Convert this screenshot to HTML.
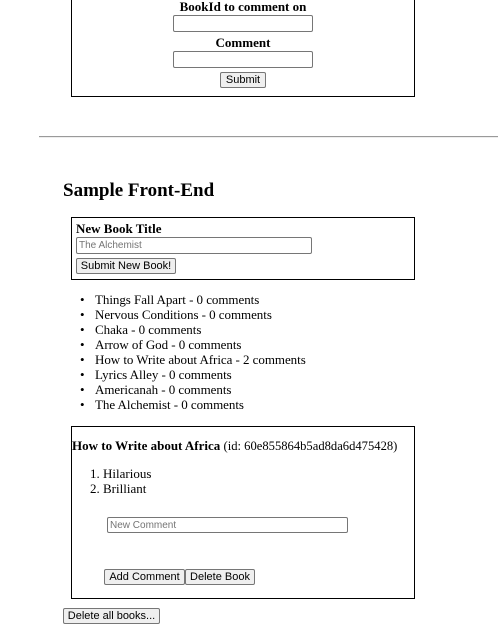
<!DOCTYPE html>
<html><head><style>
*{margin:0;padding:0;box-sizing:border-box}
body{width:498px;height:635px;overflow:hidden;background:#fff;font-family:"Liberation Serif",serif;font-size:13px;color:#000;position:relative}
.a{position:absolute;white-space:nowrap}
.box{position:absolute;border:1px solid #000}
input{position:absolute;border:1px solid #767676;border-radius:2px;background:#fff;font-family:"Liberation Sans",sans-serif;font-size:10px;padding:0 2px;color:#999}
button{position:absolute;border:1px solid #767676;border-radius:2px;background:#efefef;font-family:"Liberation Sans",sans-serif;font-size:11px;color:#000;line-height:13px;padding-top:1px}
b{font-weight:bold}
.ul div{letter-spacing:-0.05px;height:15px;line-height:15px;position:relative;padding-left:15px}
.dot{position:absolute;left:0;top:0;font-size:13px;line-height:15px}
</style></head><body>
<div class="box" style="left:71px;top:-5px;width:344px;height:102px"></div>
<div class="a" style="left:0;width:486px;text-align:center;top:-1px;font-weight:bold;line-height:15px">BookId to comment on</div>
<input style="left:173px;top:15px;width:140px;height:17px">
<div class="a" style="left:0;width:486px;text-align:center;top:35px;font-weight:bold;line-height:15px">Comment</div>
<input style="left:173px;top:51px;width:140px;height:17px">
<button style="left:220px;top:72px;width:46px;height:16px">Submit</button>

<div class="a" style="left:39px;top:136px;width:459px;height:2px;border-top:1px solid #9a9a9a;border-bottom:1px solid #eee"></div>
<div class="a" style="left:63px;top:180px;font-size:19px;font-weight:bold;line-height:22px">Sample Front-End</div>

<div class="box" style="left:71px;top:217px;width:344px;height:63px"></div>
<div class="a" style="left:76px;top:221px;font-weight:bold;line-height:15px">New Book Title</div>
<input style="left:76px;top:237px;width:236px;height:17px" placeholder="The Alchemist">
<button style="left:76px;top:258px;width:100px;height:16px">Submit New Book!</button>

<div class="a ul" style="left:80px;top:292px">
<div><span class="dot">•</span>Things Fall Apart - 0 comments</div>
<div><span class="dot">•</span>Nervous Conditions - 0 comments</div>
<div><span class="dot">•</span>Chaka - 0 comments</div>
<div><span class="dot">•</span>Arrow of God - 0 comments</div>
<div><span class="dot">•</span>How to Write about Africa - 2 comments</div>
<div><span class="dot">•</span>Lyrics Alley - 0 comments</div>
<div><span class="dot">•</span>Americanah - 0 comments</div>
<div><span class="dot">•</span>The Alchemist - 0 comments</div>
</div>

<div class="box" style="left:71px;top:426px;width:344px;height:173px"></div>
<div class="a" style="left:72px;top:438px;line-height:15px"><b>How to Write about Africa</b> <span style="font-size:12.6px">(id: 60e855864b5ad8da6d475428)</span></div>
<div class="a" style="left:90px;top:466px;line-height:15px">1. Hilarious<br>2. Brilliant</div>
<input style="left:107px;top:517px;width:241px;height:16px" placeholder="New Comment">
<button style="left:104px;top:569px;width:81px;height:16px">Add Comment</button>
<button style="left:185px;top:569px;width:70px;height:16px">Delete Book</button>
<button style="left:63px;top:608px;width:97px;height:16px">Delete all books...</button>
</body></html>
